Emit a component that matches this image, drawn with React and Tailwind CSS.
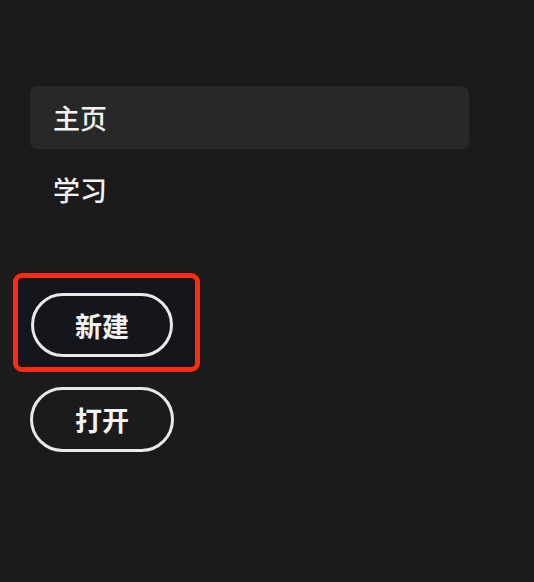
export default function App() {
  const font = { fontFamily: '"Noto Sans CJK SC", "Noto Sans", sans-serif' };
  return (
    <div
      className="flex h-[582px] w-[534px] flex-col bg-[#1b1b1b] pt-[86px] text-[#f2f2f2]"
      style={font}
    >
      <nav className="mx-[30px] flex w-[439px] flex-col gap-[9px]">
        <div className="flex h-[63px] items-center rounded-[7px] bg-[#282828] pl-[23px] text-[27px] font-medium leading-none">
          主页
        </div>
        <div className="flex h-[63px] items-center pl-[23px] text-[27px] font-medium leading-none">
          学习
        </div>
      </nav>

      <div className="ml-[13px] mt-[52px] h-[99px] w-[187px] rounded-[9px] border-[5px] border-[#ff2a10] bg-[#15161b] pl-[13px] pt-[15px]">
        <button className="flex h-[64px] w-[142px] items-center justify-center rounded-full border-[3px] border-[#e9e9e9] text-[27px] font-bold leading-none">
          新建
        </button>
      </div>

      <button className="ml-[30px] mt-[15px] flex h-[65px] w-[144px] items-center justify-center rounded-full border-[3px] border-[#e9e9e9] text-[27px] font-bold leading-none">
        打开
      </button>
    </div>
  );
}
